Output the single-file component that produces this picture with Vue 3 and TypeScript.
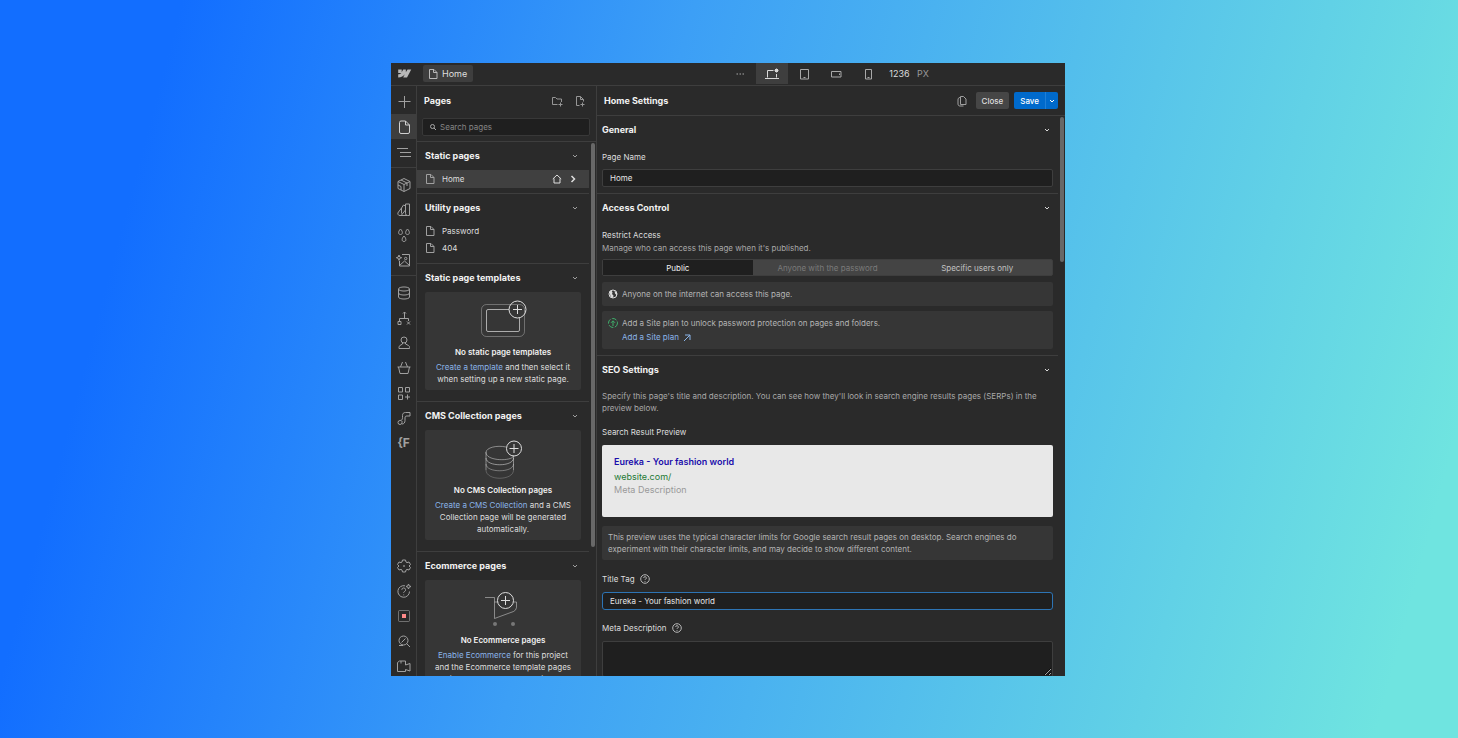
<script setup lang="ts">
import { ref } from 'vue'

interface RailItem {
  name: string
  paths: string[]
  active?: boolean
  text?: string
}

const file = 'M2.500 1.500h4.500l3 3v6H2.500zM6.500 1.500v3H10'
const chevron = 'M3 4l2 2 2-2'

const railGroups: RailItem[][] = [
  [
    { name: 'Add', paths: ['M8.500 2v12M2.500 7.500h12'] },
    { name: 'Pages', active: true, paths: ['M3.500 3.500a1.500 1.500 0 0 1 1.500-1.500h4.500l4 4v7a1.500 1.500 0 0 1-1.500 1.500H5A1.500 1.500 0 0 1 3.500 13zM9.500 2v4h4'] },
    { name: 'Navigator', paths: ['M1 4.500h11M4 8.500h11M4 12.500h11'] },
  ],
  [
    { name: 'Components', paths: ['M8 1.500l6 3v7l-6 3-6-3v-7zM2 4.500l6 3 6-3M8 7.500v7M5 3l6 3v3M5 13V9.500L2 8'] },
    { name: 'Variables', paths: ['M9.500 2h4v11.500h-2a2 2 0 0 1-2-2zM9.500 4L7.500 3 5.500 6v5.500M5.500 6L2.500 10a2 2 0 0 0 1.500 3.500h7.500M9.500 8l-4 5'] },
    { name: 'Styles', paths: ['M4.500 2c2.500 2.500 2.500 5.500 0 5.500S2 4.500 4.500 2zM11.500 2c2.500 2.500 2.500 5.500 0 5.500S9 4.500 11.500 2zM8 9c2.500 2.500 2.500 5.500 0 5.500s-2.500-3 0-5.500z'] },
    { name: 'Assets', paths: ['M6 2.500h7.500v11.500h-10V9M3.500 13.500L8.500 9l5 4.500M8.500 6.500a1.200 1.200 0 1 0 2.400 0 1.200 1.200 0 1 0-2.400 0M3 3l.7 2 2 .7-2 .7-.7 2-.7-2-2-.7 2-.7z'] },
  ],
  [
    { name: 'CMS', paths: ['M2.500 4c0-2.700 11-2.700 11 0s-11 2.700-11 0zM2.500 4v8c0 2.700 11 2.700 11 0V4M2.500 8c0 2.700 11 2.700 11 0'] },
    { name: 'Logic', paths: ['M8.500 2v6M3.500 11V8.500h9V11M7 3.500l1.500-1.500L10 3.500M2 11.500h3v3H2zM11 11.500l3 3M14 11.500l-3 3'] },
    { name: 'Users', paths: ['M5 5a3 3 0 1 0 6 0 3 3 0 1 0-6 0M6.500 7.500v1.500l-2.500 1.500a2 2 0 0 0-1 1.800v1.200h10.500v-1.200a2 2 0 0 0-1-1.800L9.500 9V7.500'] },
    { name: 'Ecommerce', paths: ['M1.500 7h13M2.500 7l1.500 6.500h8L13.500 7M4.500 7l2-5M11.500 7l-2-5'] },
    { name: 'Apps', paths: ['M2.500 2.500h4v4.500h-4zM9.500 2.500h4v4.500h-4zM2.500 10h4v4.500h-4zM11.500 9.500v5M9 12h5'] },
    { name: 'Custom flow', paths: ['M14 2.500H9.500C7.500 2.500 6.500 3.500 6.500 5.500v2c0 2-.5 3-2.500 3a2 2 0 1 0 2 2V11M14 2.500v3.500h-3C9.500 6 9 6.500 9 8v2.500c0 2-1 3.500-3 3.500'] },
    { name: 'Finsweet', paths: [], text: '{F' },
  ],
]

const railBottom: RailItem[] = [
  { name: 'Settings', paths: ['M6.500 2h3l.5 2 1 .6 2-.6 1.500 2.500L13 8l1.500 1.500L13 12l-2-.6-1 .6-.5 2h-3L6 12l-1-.6-2 .6-1.500-2.500L3 8 1.500 6.500 3 4l2 .6L6 4zM7.500 8a.5 .5 0 1 0 1 0 .5 .5 0 1 0-1 0'] },
  { name: 'Help', paths: ['M9 2.800a5.800 5.800 0 1 0 4.500 5.700M5.800 6.800a1.900 1.900 0 1 1 2.600 1.800c-.7.300-.7.800-.7 1.300M7.700 11.500v.8M12.500 1l.7 1.800 1.800.7-1.800.7-.7 1.800-.7-1.800L10 3.500l1.800-.7z'] },
  { name: 'Record', paths: [] },
  { name: 'Find', paths: ['M3 7.500a4.500 4.500 0 1 0 9 0 4.500 4.500 0 1 0-9 0M10.500 10.500l3.500 3.500M5.500 9.500L9.500 5.500M3 12.500h4'] },
  { name: 'Video tutorials', paths: ['M1.500 4.500L3.500 3h6v4l4.500-1.500v7.500l-4.500-1.500V13.500h-8zM5 3v2.500'] },
]

const devices = [
  { name: 'Desktop', active: true, d: 'M3.500 11.500V4.500h6M12.500 8v3.500M1 12.500h14M12.500 2.500v4M10.500 4.500h4M11 3l3 3M14 3l-3 3' },
  { name: 'Tablet', active: false, d: 'M4.500 3.500h8v9.500h-8zM7.500 11.500h2' },
  { name: 'Mobile landscape', active: false, d: 'M3.500 5.500h9.500v5.500H3.500zM11.500 7.500v1.500' },
  { name: 'Mobile portrait', active: false, d: 'M5.500 3.500h6v9.500h-6zM7.500 11.500h2' },
]

const access = [
  { value: 'public', label: 'Public', disabled: false },
  { value: 'password', label: 'Anyone with the password', disabled: true },
  { value: 'users', label: 'Specific users only', disabled: false },
]

const utilityPages = ['Password', '404']
const pageName = ref('Home')
const titleTag = ref('Eureka - Your fashion world')
const description = ref('')
const search = ref('')
const selectedAccess = ref('public')
</script>

<template>
  <div class="desktop">
    <main class="app">
      <header class="topbar">
        <button class="logo" aria-label="Webflow">
          <svg viewBox="0 0 16 10"><path d="M15.500 0.500L10.800 9.500H6.500L8.400 5.800C6.800 8 4.500 9.300 1 9.500V5.900s2.200-.1 3.500-1.500H1V.5h3.900v3.200L6.600.5h2.900v3.200L11.400.5z" fill="currentColor" /></svg>
        </button>
        <button class="crumb">
          <svg class="i12 line" viewBox="0 0 12 12"><path :d="file" /></svg>Home
        </button>
        <span class="grow"></span>
        <button class="device more" aria-label="More breakpoints">
          <svg class="i16" viewBox="0 0 16 16"><path d="M4.500 7.500h1.500v1H4.500zM7.500 7.500H9v1H7.500zM10.500 7.500H12v1h-1.500z" fill="currentColor" /></svg>
        </button>
        <button v-for="d in devices" :key="d.name" class="device" :class="{ active: d.active }" :aria-label="d.name">
          <svg class="i16 line" viewBox="0 0 16 16"><path :d="d.d" /></svg>
        </button>
        <span class="size">1236 <small>PX</small></span>
      </header>

      <div class="body">
        <nav class="rail">
          <div v-for="(group, g) in railGroups" :key="g" class="rail-group">
            <button v-for="item in group" :key="item.name" class="rail-item" :class="{ active: item.active }" :aria-label="item.name">
              <b v-if="item.text" class="glyph">{{ item.text }}</b>
              <svg v-else class="i16 line" viewBox="0 0 16 16"><path v-for="p in item.paths" :key="p" :d="p" /></svg>
            </button>
          </div>
          <div class="rail-bottom">
            <button v-for="item in railBottom" :key="item.name" class="rail-item" :aria-label="item.name">
              <svg class="i16 line" viewBox="0 0 16 16">
                <template v-if="item.name === 'Record'">
                  <rect x="2.500" y="2.500" width="11" height="11" rx="1" opacity="0.6" />
                  <rect x="6" y="6" width="4" height="4" class="record" />
                </template>
                <path v-for="p in item.paths" :key="p" :d="p" />
              </svg>
            </button>
          </div>
        </nav>

        <aside class="pages">
          <div class="pages-head">
            <h2>Pages</h2>
            <button aria-label="New folder">
              <svg class="i14 line" viewBox="0 0 14 14"><path d="M7.500 10.500h-5v-7h3l1.500 1.500h4.500v3M10.500 8.500v4M8.500 10.500h4" /></svg>
            </button>
            <button aria-label="New page">
              <svg class="i14 line" viewBox="0 0 14 14"><path d="M6.500 11.500h-3v-9h4l3 3v2M7.500 2.500v3h3M9.500 8.500v4M7.500 10.500h4" /></svg>
            </button>
          </div>
          <div class="search">
            <svg class="i8 line" viewBox="0 0 8 8"><path d="M1.500 3.500a2 2 0 1 0 4 0 2 2 0 1 0-4 0M5 5l2 2" /></svg>
            <input v-model="search" type="search" placeholder="Search pages" aria-label="Search pages" />
          </div>

          <div class="scroller">
            <div class="scroll-content">
              <section class="tight">
                <h3>Static pages<svg class="i10 line" viewBox="0 0 10 10"><path :d="chevron" /></svg></h3>
                <button class="row selected">
                  <svg class="i12 line" viewBox="0 0 12 12"><path :d="file" /></svg>
                  <span class="grow">Home</span>
                  <svg class="i10 line" viewBox="0 0 10 10"><path d="M.8 5L5 1l4.200 4M2 4.500V9h6V4.500" /></svg>
                  <svg class="i10 line bold" viewBox="0 0 10 10"><path d="M3.500 2l3 3-3 3" /></svg>
                </button>
              </section>
              <section>
                <h3>Utility pages<svg class="i10 line" viewBox="0 0 10 10"><path :d="chevron" /></svg></h3>
                <button v-for="p in utilityPages" :key="p" class="row">
                  <svg class="i12 line" viewBox="0 0 12 12"><path :d="file" /></svg>
                  <span class="grow">{{ p }}</span>
                </button>
              </section>
              <section class="loose">
                <h3>Static page templates<svg class="i10 line" viewBox="0 0 10 10"><path :d="chevron" /></svg></h3>
                <div class="card">
                  <svg class="art line" viewBox="0 0 60 54">
                    <rect x="8.500" y="12.500" width="43" height="32" rx="5" opacity="0.35" />
                    <path d="M36 17.500H15a1.500 1.500 0 0 0-1.500 1.500v19a1.500 1.500 0 0 0 1.500 1.500h30a1.500 1.500 0 0 0 1.500-1.500V26" opacity="0.700" />
                    <circle cx="44.500" cy="17.500" r="8.500" /><path d="M44.500 13v9M40 17.500h9" />
                  </svg>
                  <h4>No static page templates</h4>
                  <p><a href="#template">Create a template</a> and then select it when setting up a new static page.</p>
                </div>
              </section>
              <section class="loose">
                <h3>CMS Collection pages<svg class="i10 line" viewBox="0 0 10 10"><path :d="chevron" /></svg></h3>
                <div class="card">
                  <svg class="art line" viewBox="0 0 60 54">
                    <path d="M33 17c-9-2-20 .5-20 5.500 0 9 27.500 9 27.500 3M13 22v18M40.500 26v14" opacity="0.500" />
                    <path d="M13 28c0 9 27.500 9 27.500 0" opacity="0.550" />
                    <path d="M13 34c0 9 27.500 9 27.500 0" opacity="0.400" />
                    <path d="M13 40c0 11 27.500 11 27.500 0" opacity="0.250" />
                    <circle cx="41" cy="18.500" r="7.500" /><path d="M41 14v9M36.500 18.500h9" />
                  </svg>
                  <h4>No CMS Collection pages</h4>
                  <p><a href="#collection">Create a CMS Collection</a> and a CMS Collection page will be generated automatically.</p>
                </div>
              </section>
              <section class="loose">
                <h3>Ecommerce pages<svg class="i10 line" viewBox="0 0 10 10"><path :d="chevron" /></svg></h3>
                <div class="card">
                  <svg class="art line" viewBox="0 0 60 54">
                    <path d="M12 17.500h9.500v21l19-7a5 5 0 0 0 3-4v-5.500h-3M21.500 22H25" opacity="0.500" />
                    <circle cx="32.500" cy="20.500" r="8" /><path d="M32.500 16v9M28 20.500h9" />
                    <circle cx="22" cy="44" r="2" class="wheel" /><circle cx="40" cy="44" r="2" class="wheel" />
                  </svg>
                  <h4>No Ecommerce pages</h4>
                  <p><a href="#ecommerce">Enable Ecommerce</a> for this project and the Ecommerce template pages will be generated automatically.</p>
                </div>
              </section>
            </div>
            <div class="track"><div class="thumb pages-thumb"></div></div>
          </div>
        </aside>

        <div class="settings">
          <div class="settings-head">
            <h2>Home Settings</h2>
            <button class="copy" aria-label="Duplicate page">
              <svg class="i14 line" viewBox="0 0 14 14"><path d="M5.500 2.500h3l2.500 2.500v5.500h-5.500zM5 3.500c-1.500 0-2 1-2 2.500V10c0 1.500 1 2 2 2H8.500" /></svg>
            </button>
            <button class="close">Close</button>
            <div class="save">
              <button>Save</button>
              <button class="save-more" aria-label="More save options"><svg class="i10 line" viewBox="0 0 10 10"><path :d="chevron" /></svg></button>
            </div>
          </div>

          <div class="scroller">
            <div class="scroll-content">
              <section>
                <h3>General<svg class="i10 line" viewBox="0 0 10 10"><path :d="chevron" /></svg></h3>
                <label class="field-label first" for="page-name">Page Name</label>
                <input id="page-name" v-model="pageName" type="text" class="field" />
              </section>

              <section>
                <h3>Access Control<svg class="i10 line" viewBox="0 0 10 10"><path :d="chevron" /></svg></h3>
                <fieldset>
                  <legend>Restrict Access</legend>
                  <p class="muted">Manage who can access this page when it's published.</p>
                  <div class="segmented">
                    <label v-for="a in access" :key="a.value" :class="{ on: selectedAccess === a.value, off: a.disabled }">
                      <input v-model="selectedAccess" type="radio" name="access" :value="a.value" :disabled="a.disabled" />{{ a.label }}
                    </label>
                  </div>
                </fieldset>
                <div class="note">
                  <svg class="i10 globe" viewBox="0 0 10 10"><circle cx="5" cy="5" r="4" /><path d="M1.500 2.500L3.500 1.500l1 2L4 5l1.500 1.500L5 9 2.500 7.500zM6.500 1.500L9 4v2.500L7 4.500z" /></svg>
                  <span>Anyone on the internet can access this page.</span>
                </div>
                <div class="note">
                  <svg class="i10 upgrade" viewBox="0 0 10 10"><circle cx="5" cy="5" r="4.500" stroke-dasharray="5 1.500" /><path d="M5 8V3M3 4.800L5 2.800l2 2" /></svg>
                  <span class="stack">Add a Site plan to unlock password protection on pages and folders.
                    <a href="#plan">Add a Site plan <svg class="i8 line" viewBox="0 0 8 8"><path d="M1 7l6-6M2 1h5v5" /></svg></a>
                  </span>
                </div>
              </section>

              <section>
                <h3>SEO Settings<svg class="i10 line" viewBox="0 0 10 10"><path :d="chevron" /></svg></h3>
                <p class="muted intro">Specify this page's title and description. You can see how they'll look in search engine results pages (SERPs) in the preview below.</p>
                <div class="field-label">Search Result Preview</div>
                <article class="preview">
                  <strong>Eureka - Your fashion world</strong>
                  <span class="url">website.com/</span>
                  <span class="meta">Meta Description</span>
                </article>
                <div class="note hint">This preview uses the typical character limits for Google search result pages on desktop. Search engines do experiment with their character limits, and may decide to show different content.</div>
                <label class="field-label" for="title-tag">Title Tag
                  <svg class="i10 line help" viewBox="0 0 10 10"><circle cx="5" cy="5" r="4.300" /><path d="M3.700 4a1.300 1.300 0 1 1 1.900 1.100C5 5.400 5 5.600 5 6M5 7v.8" /></svg>
                </label>
                <input id="title-tag" v-model="titleTag" type="text" class="field focused" />
                <label class="field-label" for="meta-description">Meta Description
                  <svg class="i10 line help" viewBox="0 0 10 10"><circle cx="5" cy="5" r="4.300" /><path d="M3.700 4a1.300 1.300 0 1 1 1.900 1.100C5 5.400 5 5.600 5 6M5 7v.8" /></svg>
                </label>
                <textarea id="meta-description" v-model="description" class="field"></textarea>
              </section>
            </div>
            <div class="track"><div class="thumb settings-thumb"></div></div>
          </div>
        </div>
      </div>
    </main>
  </div>
</template>

<style>
body {
  margin: 0;
}
</style>

<style scoped>
* {
  box-sizing: border-box;
}
.desktop {
  height: 100vh;
  padding: 63px 393px 62px 391px;
  background: linear-gradient(105deg, #126eff 11%, #3c9ff6 42%, #6fe4e0 95%);
  font: 8px/12px Inter, "Liberation Sans", sans-serif;
  color: #dedede;
}
.app {
  height: 100%;
  display: flex;
  flex-direction: column;
  overflow: hidden;
  background: #2a2a2a;
}
button {
  padding: 0;
  border: 0;
  background: none;
  font: inherit;
  color: inherit;
  display: flex;
  align-items: center;
  justify-content: center;
}
h2,
h3,
h4,
p,
fieldset,
legend {
  margin: 0;
  padding: 0;
  border: 0;
}
h2,
h3 {
  font-size: 9px;
  font-weight: 700;
  color: #f2f2f2;
}
a {
  color: #8ab4e8;
  text-decoration: none;
}
svg {
  flex: none;
}
.line {
  fill: none;
  stroke: currentColor;
  stroke-width: 1;
}
.bold {
  stroke-width: 1.5;
}
.i8 {
  width: 8px;
  height: 8px;
}
.i10 {
  width: 10px;
  height: 10px;
}
.i12 {
  width: 12px;
  height: 12px;
}
.i14 {
  width: 14px;
  height: 14px;
}
.i16 {
  width: 16px;
  height: 16px;
}
.grow {
  flex: 1;
}

.topbar {
  flex: none;
  display: flex;
  align-items: center;
  height: 23px;
  padding: 0 136px 1px 0;
  border-bottom: 1px solid #3e3e3e;
}
.logo {
  width: 26px;
  color: #b8b8b8;
}
.logo svg {
  width: 15px;
  height: 9px;
}
.crumb {
  gap: 3px;
  height: 17px;
  margin: 0 6px;
  padding: 0 6px 0 4px;
  border-radius: 2px;
  background: #3e3e3e;
  font-size: 9px;
}
.crumb svg {
  color: #b8b8b8;
}
.device {
  width: 32px;
  align-self: stretch;
  color: #a8a8a8;
}
.device.active {
  background: #3e3e3e;
  color: #d9d9d9;
}
.size {
  padding-left: 5px;
  font-size: 9px;
}
.size small {
  padding-left: 5px;
  font-size: 9px;
  color: #999;
}

.body {
  flex: 1;
  min-height: 0;
  display: flex;
}
.rail {
  flex: none;
  width: 26px;
  display: flex;
  flex-direction: column;
  padding-top: 3px;
  border-right: 1px solid #3e3e3e;
  color: #a0a0a0;
}
.rail-group + .rail-group {
  margin-top: 3px;
  padding-top: 4px;
  border-top: 1px solid #3e3e3e;
}
.rail-bottom {
  margin: auto 0 -2px;
}
.rail-item {
  width: 100%;
  height: 25px;
}
.rail-item.active {
  background: #3e3e3e;
  color: #d0d0d0;
}
.record {
  fill: #ff8a8a;
  stroke: none;
}
.glyph {
  font-size: 12px;
}

.pages {
  flex: none;
  width: 180px;
  display: flex;
  flex-direction: column;
  border-right: 1px solid #3e3e3e;
}
.pages-head {
  display: flex;
  align-items: center;
  gap: 9px;
  height: 29px;
  padding: 0 9px 0 7px;
  color: #969696;
}
.pages-head h2 {
  flex: 1;
}
.search {
  display: flex;
  align-items: center;
  gap: 3px;
  height: 18px;
  margin: 3px 6px 5px 5px;
  padding-left: 6px;
  border: 1px solid #383838;
  border-radius: 2px;
  background: #1f1f1f;
  color: #a8a8a8;
}
.search input {
  flex: 1;
  min-width: 0;
  padding: 0;
  border: 0;
  outline: 0;
  background: none;
  font: inherit;
  color: #d9d9d9;
}
.search input::placeholder {
  color: #858585;
}
.scroller {
  flex: 1;
  min-height: 0;
  display: flex;
  border-top: 1px solid #3e3e3e;
}
.scroll-content {
  flex: 1;
  min-width: 0;
  overflow: hidden;
}
.track {
  flex: none;
  width: 7px;
  padding: 1px 2px;
}
.thumb {
  width: 4px;
  border-radius: 2px;
  background: #686868;
}
.pages-thumb {
  height: 76%;
}
.settings-thumb {
  height: 26%;
}
section {
  border-bottom: 1px solid #3e3e3e;
}
.pages section {
  padding-bottom: 7px;
}
.pages section.tight {
  padding-bottom: 5px;
}
.pages section.loose {
  padding-bottom: 11px;
}
h3 {
  display: flex;
  align-items: center;
  justify-content: space-between;
  height: 28px;
  padding: 0 9px 0 8px;
}
h3 svg {
  color: #a0a0a0;
}
.row {
  width: 100%;
  height: 17px;
  gap: 6px;
  padding: 0 11px 0 7px;
  text-align: left;
}
.row .i12 {
  color: #a0a0a0;
}
.row.selected {
  height: 18px;
  background: #404040;
}
.card {
  display: flex;
  flex-direction: column;
  align-items: center;
  margin: 0 8px;
  padding-bottom: 5px;
  border-radius: 2px;
  background: #363636;
  text-align: center;
}
.art {
  width: 60px;
  height: 54px;
}
.wheel {
  fill: #777;
  stroke: none;
}
h4 {
  margin: 0 0 3px;
  font-size: 8px;
  font-weight: 600;
  color: #f2f2f2;
}
.card p {
  padding: 0 6px;
}

.settings {
  flex: 1;
  min-width: 0;
  display: flex;
  flex-direction: column;
}
.settings-head {
  display: flex;
  align-items: center;
  height: 29px;
  padding: 0 7px;
}
.settings-head h2 {
  flex: 1;
}
.copy {
  margin-right: 7px;
  color: #a0a0a0;
}
.close,
.save {
  height: 17px;
  border-radius: 2px;
  font-weight: 500;
}
.close {
  margin-right: 5px;
  padding: 0 6px;
  background: #464646;
}
.save {
  display: flex;
  overflow: hidden;
  background: #006acc;
  color: #fff;
}
.save button {
  padding: 0 6px;
}
.save .save-more {
  padding: 0 1px;
  border-left: 1px solid #1f7ed6;
}
.settings section {
  padding: 0 5px 6px;
}
.settings h3 {
  padding: 0 1px 0 0;
}
.settings h3 svg {
  color: #d9d9d9;
}
fieldset {
  padding-top: 7px;
}
legend {
  float: left;
  width: 100%;
  margin-bottom: 1px;
}
.field-label {
  display: flex;
  align-items: center;
  gap: 5px;
  margin: 12px 0 7px;
}
.field-label.first {
  margin: 7px 0 6px;
}
.help {
  color: #b8b8b8;
}
.field {
  display: block;
  width: 100%;
  height: 18px;
  padding: 0 7px;
  border: 1px solid #3e3e3e;
  border-radius: 2px;
  outline: 0;
  background: #1f1f1f;
  font: inherit;
  color: #e6e6e6;
}
.field.focused {
  border-color: #2d74b4;
  border-radius: 3px;
}
textarea.field {
  height: 36px;
}
.muted {
  color: #a8a8a8;
}
.segmented {
  display: flex;
  height: 17px;
  margin: 5px 0 1px;
  border: 1px solid #3e3e3e;
  border-radius: 2px;
  background: #444;
  color: #c2c2c2;
}
.segmented label {
  flex: 1;
  display: flex;
  align-items: center;
  justify-content: center;
}
.segmented input {
  appearance: none;
  width: 0;
  margin: 0;
}
.segmented .on {
  background: #1f1f1f;
  color: #f2f2f2;
}
.segmented .off {
  color: #7a7a7a;
}
.note {
  display: flex;
  gap: 4px;
  margin-top: 5px;
  padding: 6px;
  border-radius: 2px;
  background: #363636;
  color: #b4b4b4;
}
.note svg {
  margin-top: 1px;
}
.stack a {
  display: flex;
  align-items: center;
  gap: 4px;
  margin-top: 2px;
}
.globe {
  fill: #d9d9d9;
  stroke: none;
}
.globe circle {
  fill: none;
  stroke: #d9d9d9;
}
.upgrade {
  fill: none;
  stroke: #3fae6b;
}
.intro {
  padding-top: 6px;
}
.preview {
  display: flex;
  flex-direction: column;
  gap: 1px;
  height: 72px;
  padding: 11px 12px;
  border-radius: 2px;
  background: #e8e8e8;
  font-size: 9px;
}
.preview strong {
  font-weight: 600;
  margin-bottom: 2px;
  color: #1a0dab;
}
.url {
  color: #1e7a34;
}
.meta {
  color: #999;
}
.hint {
  margin: 9px 0 13px;
  padding: 5px 6px;
}
</style>
